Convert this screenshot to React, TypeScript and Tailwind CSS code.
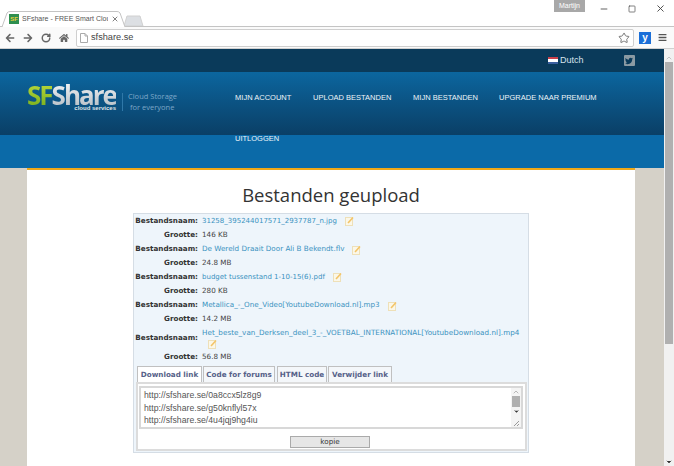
import React from "react";
import { RotateCw, Star, X, Minus, Square, ChevronUp, ChevronDown } from "lucide-react";
import { FaTwitter, FaArrowLeft, FaArrowRight, FaBars, FaHome } from "react-icons/fa";

const files = [
  { name: "31258_395244017571_2937787_n.jpg", size: "146 KB", cls: "text-[7px]" },
  { name: "De Wereld Draait Door Ali B Bekendt.flv", size: "24.8 MB", cls: "" },
  { name: "budget tussenstand 1-10-15(6).pdf", size: "280 KB", cls: "text-[7px]" },
  { name: "Metallica_-_One_Video[YoutubeDownload.nl].mp3", size: "14.2 MB", cls: "" },
  {
    name: "Het_beste_van_Derksen_deel_3_-_VOETBAL_INTERNATIONAL[YoutubeDownload.nl].mp4",
    size: "56.8 MB",
    cls: "tracking-[0.03px]",
    wrap: true,
  },
];

const EditIcon = () => (
  <svg width="9" height="10" viewBox="0 0 9 10" className="inline-block align-middle">
    <rect x="0.5" y="1.5" width="7" height="8" fill="#fbf7e8" stroke="#eee0b8" />
    <path d="M3 7 L8 1.5" stroke="#f3c468" strokeWidth="1.6" />
  </svg>
);

const PageIcon = () => (
  <svg width="8" height="10" viewBox="0 0 8 10">
    <path d="M0.5 0.5 H5 L7.5 3 V9.5 H0.5 Z M5 0.5 V3 H7.5" fill="#fff" stroke="#aaa" />
  </svg>
);

const BrowserChrome = () => (
  <div className="h-[49px] bg-white flex flex-col font-['Liberation_Sans',sans-serif]">
    <div className="h-[27px] flex border-b border-[#c4c4c4]">
      {/* active tab, slanted sides */}
      <div className="relative ml-[2px] mt-[11px] w-[123px] h-[16px] -mb-px z-10 flex items-center pl-[7px]">
        <svg width="123" height="16" viewBox="0 0 123 16" className="absolute inset-0">
          <path d="M0 16 L5 2 Q6 0.5 8 0.5 H115 Q117 0.5 118 2 L123 16" fill="#fff" stroke="#c4c4c4" />
        </svg>
        <div className="relative w-[10px] h-[10px] bg-[#2f8f4f] flex items-center justify-center text-[6px] font-bold text-[#e8d040] leading-none">SF</div>
        <span className="relative ml-[3px] text-[7px] text-[#555] w-[86px] overflow-hidden whitespace-nowrap">SFshare - FREE Smart Clou</span>
        <X size={8} strokeWidth={2.5} className="relative ml-[3px] text-[#666]" />
      </div>
      <svg width="20" height="11" viewBox="0 0 20 11" className="mt-[15px] -ml-[1px]">
        <path d="M0 11 L3 1 H16 L19 11 Z" fill="#dcdfe3" stroke="#d0d0d0" />
      </svg>
      <div className="ml-auto flex items-start">
        <div className="w-[31px] h-[12px] mr-[5px] bg-[#a8a8a8] text-[7px] text-white text-center leading-[12px]">Martijn</div>
        <div className="w-[28px] h-[17px] flex items-center justify-center text-[#444]"><Minus size={10} /></div>
        <div className="w-[28px] h-[17px] flex items-center justify-center text-[#444]"><Square size={8} /></div>
        <div className="w-[28px] h-[17px] flex items-center justify-center text-[#444]"><X size={11} /></div>
      </div>
    </div>
    <div className="h-[22px] flex items-center pl-[5px] pr-[5px] bg-[#fafafa] border-b border-[#d0d0d0]">
      <FaArrowLeft size={10} className="text-[#666]" />
      <FaArrowRight size={10} className="ml-[8px] text-[#666]" />
      <RotateCw size={10} strokeWidth={3.5} className="ml-[8px] text-[#666]" />
      <FaHome size={10} className="ml-[8px] text-[#666]" />
      <div className="ml-[7px] h-[18px] w-[558px] bg-white border border-[#cfcfcf] rounded-[2px] flex items-center pl-[3px]">
        <PageIcon />
        <span className="ml-[3px] text-[9.2px] text-[#444]">sfshare.se</span>
        <Star size={12} className="ml-auto mr-[3px] text-[#777]" />
      </div>
      <div className="ml-[5px] w-[12px] h-[12px] bg-[#1b6fd8] text-white text-[10px] font-bold leading-[11px] text-center">y</div>
      <FaBars size={9} className="ml-[7px] text-[#555]" />
    </div>
  </div>
);

const Header = () => (
  <div className="font-['Liberation_Sans',sans-serif]">
    <div className="h-[23px] bg-[#0a3a5a] flex items-center">
      <div className="ml-[548px] w-[10px] h-[7px] flex flex-col">
        <div className="h-[2px] bg-[#c8404a]" />
        <div className="h-[3px] bg-white" />
        <div className="h-[2px] bg-[#3a5f9f]" />
      </div>
      <span className="ml-[2px] text-[9px] text-[#d8e4ec]">Dutch</span>
      <div className="ml-[40px] w-[11px] h-[11px] bg-[#8b9aa3] rounded-[1px] flex items-center justify-center">
        <FaTwitter size={8} className="text-[#0a3a5a]" />
      </div>
    </div>
    <div className="h-[63px] bg-gradient-to-b from-[#0b669f] to-[#0a3f66] flex">
      <div className="ml-[27px] mt-[13px] w-[90px] relative">
        <div className="text-[26px] font-bold leading-[20px] tracking-[-2px] whitespace-nowrap font-['Open_Sans',sans-serif]">
          <span className="bg-gradient-to-b from-[#c8e040] to-[#6aa818] bg-clip-text text-transparent">SF</span>
          <span className="bg-gradient-to-b from-white to-[#aab4bc] bg-clip-text text-transparent">Share</span>
        </div>
        <div className="absolute right-[1px] top-[20px] text-[6px] font-bold text-[#dfe4e8] leading-none whitespace-nowrap">cloud services</div>
      </div>
      <div className="ml-[5px] mt-[21px] w-px h-[18px] bg-[#2f78a8]" />
      <div className="ml-[5px] mt-[19px] text-[7.5px] leading-[11px] text-[#7da7c8] font-['Open_Sans',sans-serif]">
        <div>Cloud Storage</div>
        <div className="ml-[2px]">for everyone</div>
      </div>
      <div className="ml-[58px] mt-[20px] flex text-[7.5px] text-[#eef4f8] whitespace-nowrap">
        <div className="w-[78px]">MIJN ACCOUNT</div>
        <div className="w-[100px]">UPLOAD BESTANDEN</div>
        <div className="w-[86px]">MIJN BESTANDEN</div>
        <div className="w-[100px]">UPGRADE NAAR PREMIUM</div>
      </div>
    </div>
    <div className="h-[33px] bg-[#0b6aa8] pl-[235px] text-[7.5px] text-[#eef4f8] leading-[7px]">UITLOGGEN</div>
  </div>
);

const UploadBox = () => (
  <div className="mx-auto w-[396px] bg-[#eef5fb] border border-[#d5dde5] font-['DejaVu_Sans',sans-serif] text-[7.2px] text-[#444] pb-[1px]">
    <div className="flex flex-col">
      {files.map((f) => (
        <React.Fragment key={f.name}>
          <div className={f.wrap ? "flex items-center h-[24px]" : "flex items-center h-[14px]"}>
            <div className="w-[64px] text-right font-bold text-[#333] shrink-0">Bestandsnaam:</div>
            <div className={`ml-[4px] text-[#3a92bf] leading-[11px] whitespace-nowrap ${f.cls}`}>
              {f.name}
              {f.wrap ? (
                <div className="ml-[6px]"><EditIcon /></div>
              ) : (
                <span className="ml-[8px]"><EditIcon /></span>
              )}
            </div>
          </div>
          <div className="flex items-center h-[14px]">
            <div className="w-[64px] text-right font-bold text-[#333] shrink-0">Grootte:</div>
            <div className="ml-[4px]">{f.size}</div>
          </div>
        </React.Fragment>
      ))}
    </div>
    <div className="ml-[3px] mt-[2px] flex h-[16px] items-end font-bold text-[#555f88] text-center leading-[15px] whitespace-nowrap">
      <div className="w-[65px] h-[16px] bg-white border border-b-0 border-[#c0c0c0]">Download link</div>
      <div className="ml-[1px] w-[72px] h-[16px] bg-[#f4f7fa] border border-b-0 border-[#c0c0c0]">Code for forums</div>
      <div className="ml-[2px] w-[50px] h-[16px] bg-[#f4f7fa] border border-b-0 border-[#c0c0c0]">HTML code</div>
      <div className="ml-[1px] w-[64px] h-[16px] bg-[#f4f7fa] border border-b-0 border-[#c0c0c0]">Verwijder link</div>
    </div>
    <div className="ml-[2px] w-[391px] h-[69px] bg-white border-2 border-[#dcdcdc] flex flex-col items-start pl-[1px]">
      <div className="mt-[2px] w-[384px] h-[43px] border-2 border-[#d8d8d8] flex font-['Liberation_Sans',sans-serif] text-[8.7px] text-[#555]">
        <div className="flex-1 pl-[3px] pt-[1px] leading-[12.5px]">
          <div>http://sfshare.se/0a8ccx5lz8g9</div>
          <div>http://sfshare.se/g50knflyl57x</div>
          <div>http://sfshare.se/4u4jqj9hg4iu</div>
        </div>
        <div className="w-[10px] bg-[#f4f4f4] flex flex-col items-center">
          <ChevronUp size={8} className="text-[#999]" />
          <div className="w-[8px] h-[11px] bg-[#b0b0b0]" />
          <ChevronDown size={7} className="mt-[1px] text-[#333]" fill="#333" />
          <svg width="8" height="8" viewBox="0 0 8 8" className="mt-auto">
            <path d="M7 2 L2 7 M7 5 L5 7" stroke="#999" />
          </svg>
        </div>
      </div>
      <div className="mt-[7px] ml-[151px] w-[80px] h-[12px] bg-[#e6e6e6] border border-[#aaa] text-center leading-[10px] text-[#333]">kopie</div>
    </div>
  </div>
);

const PageScrollbar = () => (
  <div className="absolute right-0 top-0 bottom-0 w-[10px] bg-[#f1f1f1] flex flex-col items-center">
    <ChevronUp size={8} className="mt-[5px] text-[#aaa]" />
    <div className="w-[8px] h-[282px] bg-[#b0b0b0]" />
    <ChevronDown size={8} fill="#333" className="mt-auto text-[#333]" />
  </div>
);

export default function App() {
  return (
    <div className="w-[674px] h-[466px] overflow-hidden bg-white">
      <BrowserChrome />
      <div className="relative h-[417px] overflow-hidden pr-[10px]">
        <Header />
        <div className="bg-[#d5d1c8] h-[298px] pl-[27px] pr-[29px]">
          <div className="h-full bg-white border-t-2 border-[#f0a818]">
            <h1 className="text-center text-[18.5px] leading-[24px] pt-[13px] h-[43px] text-[#333] font-['Open_Sans',sans-serif]">
              Bestanden geupload
            </h1>
            <UploadBox />
          </div>
        </div>
        <PageScrollbar />
      </div>
    </div>
  );
}
